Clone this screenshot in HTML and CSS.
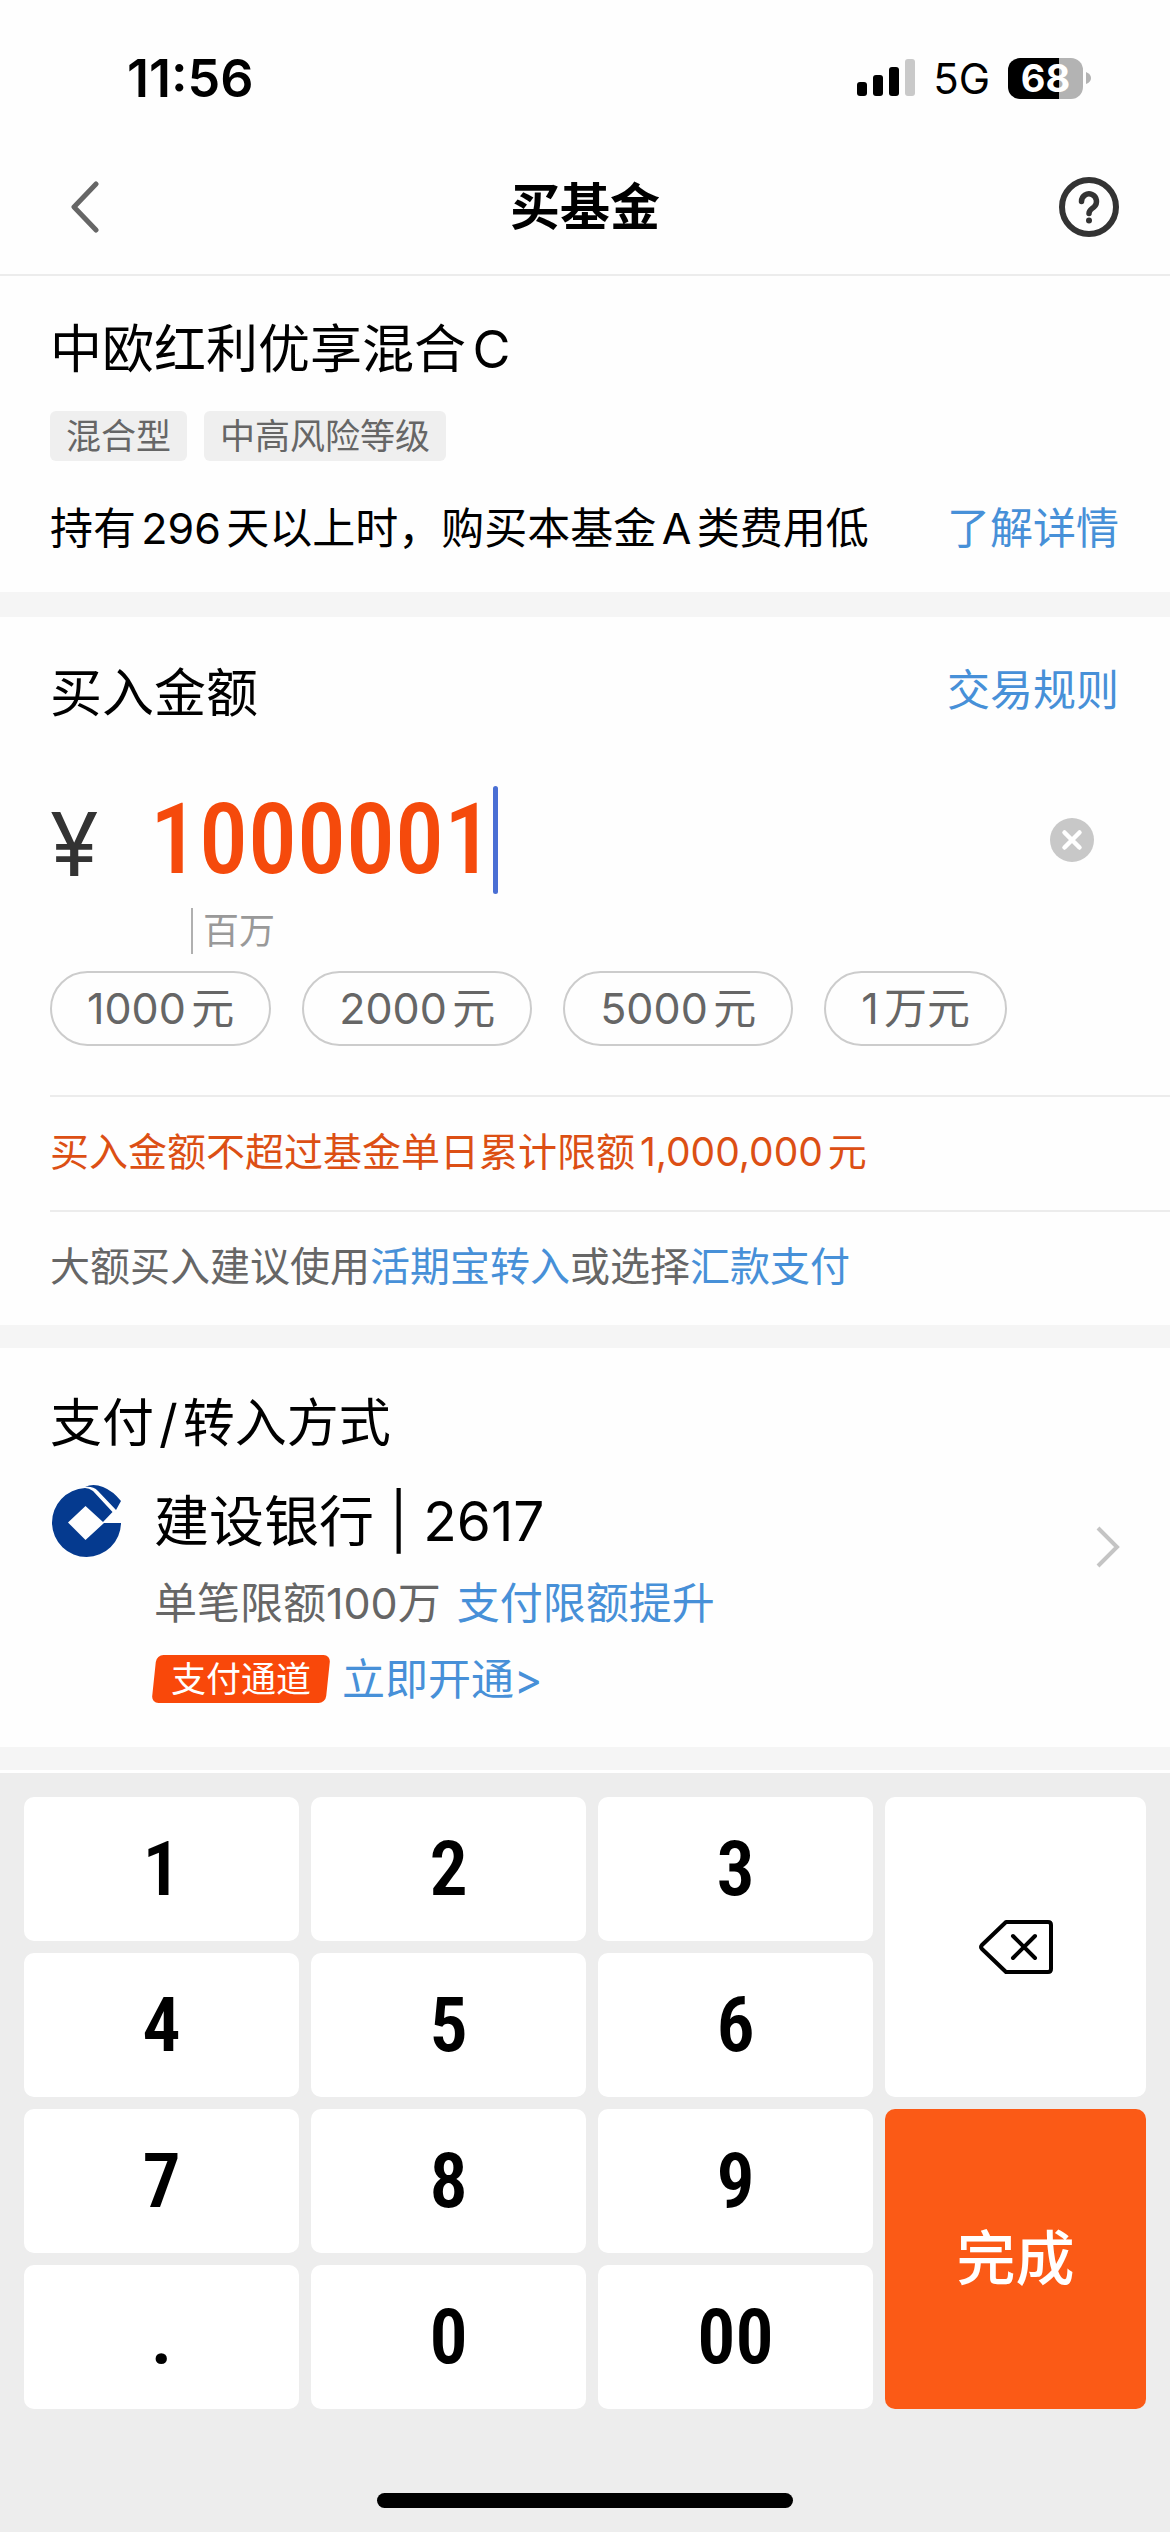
FILE: index.html
```html
<!DOCTYPE html>
<html lang="zh-CN">
<head>
<meta charset="utf-8">
<meta name="viewport" content="width=device-width, initial-scale=1">
<title>买基金</title>
<link rel="stylesheet" href="styles.css">
</head>
<body>
<div class="status">
  <span class="status-time">11:56</span>
  <div class="status-right">
    <svg class="signal" viewBox="0 0 58 38" aria-hidden="true">
      <rect x="0" y="23" width="10" height="14" rx="3"/>
      <rect x="16" y="16" width="10" height="21" rx="3"/>
      <rect x="32" y="8" width="10" height="29" rx="3"/>
      <rect x="48" y="0" width="10" height="37" rx="3" fill="#c9c9c9"/>
    </svg>
    <span class="status-net">5G</span>
    <div class="battery">
      <span class="battery-cell">68</span>
      <svg class="battery-tip" viewBox="0 0 5 12" aria-hidden="true"><path d="M0 0Q5 2 5 6T0 12Z" fill="#b3b3b3"/></svg>
    </div>
  </div>
</div>

<header class="nav">
  <button class="icon-btn icon-btn-back" type="button" aria-label="返回">
    <svg class="icon-back" viewBox="0 0 28 52" fill="none" stroke="#666" stroke-width="5" stroke-linecap="round" stroke-linejoin="round"><path d="M25 3 3 26l22 23"/></svg>
  </button>
  <h1 class="nav-title">买基金</h1>
  <button class="icon-btn" type="button" aria-label="帮助">
    <svg class="icon-help" viewBox="0 0 60 60" fill="none" stroke="#333" stroke-linecap="round" stroke-linejoin="round">
      <circle cx="30" cy="30" r="27" stroke-width="6"/>
      <path d="M22.500 24.500a7.500 7.500 0 1 1 12.500 5.500c-3 2.500-5 3-5 6.500" stroke-width="5.500"/>
      <circle cx="30" cy="43.500" r="3" fill="#333" stroke="none"/>
    </svg>
  </button>
</header>

<main>
  <section class="fund">
    <h2 class="heading">中欧红利优享混合C</h2>
    <div class="tags"><span class="tag">混合型</span><span class="tag">中高风险等级</span></div>
    <div class="fund-note">
      <p class="text-md">持有296天以上时，购买本基金A类费用低</p>
      <a class="text-md" href="#detail">了解详情</a>
    </div>
  </section>

  <section class="buy">
    <div class="buy-head">
      <h2 class="heading"><label for="amount">买入金额</label></h2>
      <a class="text-md" href="#rules">交易规则</a>
    </div>
    <div class="amount">
      <span class="amount-sign">¥</span>
      <input class="amount-input" id="amount" type="text" inputmode="decimal" value="1000001">
      <span class="amount-caret"></span>
      <button class="clear" type="button" aria-label="清除">
        <svg viewBox="0 0 44 44"><circle cx="22" cy="22" r="22" fill="#c8c8c8"/><path d="M14.500 14.500l15 15m0-15l-15 15" stroke="#fff" stroke-width="4.500" stroke-linecap="round"/></svg>
      </button>
    </div>
    <div class="unit"><span class="unit-text">百万</span></div>
    <div class="pills">
      <button class="pill" type="button">1000元</button>
      <button class="pill" type="button">2000元</button>
      <button class="pill" type="button">5000元</button>
      <button class="pill" type="button">1万元</button>
    </div>
    <p class="row row-warn">买入金额不超过基金单日累计限额1,000,000元</p>
    <p class="row row-tip">大额买入建议使用<a href="#transfer">活期宝转入</a>或选择<a href="#remit">汇款支付</a></p>
  </section>

  <section class="pay">
    <h2 class="heading">支付<span class="slash">/</span>转入方式</h2>
    <div class="bank">
      <svg class="bank-logo" viewBox="0 0 72 72" aria-hidden="true">
        <path fill="#053a8f" d="M35 3A34.500 34.500 0 1 0 71 38H54L35.500 55 18 37.500 35.500 21 53 37 62.500 27 43 6Q39 3 35 3Z"/>
        <path fill="#053a8f" d="M35 2Q43-2 53 2 63 6 71 16L66 25 48 6Q43 1 35 2Z"/>
      </svg>
      <div class="bank-info">
        <div class="bank-name">建设银行 | 2617</div>
        <div class="bank-limit"><span>单笔限额100万</span><a href="#raise">支付限额提升</a></div>
        <div class="bank-channel"><span class="badge">支付通道</span><a href="#open">立即开通&gt;</a></div>
      </div>
      <svg class="bank-arrow" viewBox="0 0 24 42" fill="none" stroke="#c4c4c4" stroke-width="4" aria-hidden="true"><path d="M2 2l19 19L2 40"/></svg>
    </div>
  </section>
</main>

<footer class="keyboard">
  <div class="keys">
    <button class="key" type="button">1</button>
    <button class="key" type="button">2</button>
    <button class="key" type="button">3</button>
    <button class="key key-tall" type="button" aria-label="删除">
      <svg class="icon-del" viewBox="0 0 74 54" fill="none" stroke="#000" stroke-width="4" stroke-linecap="round" stroke-linejoin="round"><path d="M27 2h42q3 0 3 3v44q0 3-3 3H27L3 29q-2-2 0-4Z"/><path d="M34 16l22 22m0-22L34 38"/></svg>
    </button>
    <button class="key" type="button">4</button>
    <button class="key" type="button">5</button>
    <button class="key" type="button">6</button>
    <button class="key" type="button">7</button>
    <button class="key" type="button">8</button>
    <button class="key" type="button">9</button>
    <button class="key key-tall key-done" type="button">完成</button>
    <button class="key" type="button">.</button>
    <button class="key" type="button">0</button>
    <button class="key" type="button">00</button>
  </div>
  <div class="home-bar"></div>
</footer>
</body>
</html>
```
FILE: styles.css
```css
* {
  box-sizing: border-box;
  margin: 0;
  padding: 0;
}

body {
  display: flex;
  flex-direction: column;
  min-height: 100vh;
  background: #fefefe;
  color: #000;
  font-family: Inter, "Noto Sans CJK SC", sans-serif;
  text-autospace: normal;
}

button,
input {
  border: 0;
  background: none;
  font: inherit;
  color: inherit;
}

a {
  color: #4790d8;
  text-decoration: none;
}

svg {
  display: block;
}

/* Status bar */
.status {
  display: flex;
  align-items: center;
  justify-content: space-between;
  height: 140px;
  padding: 16px 79px 0 127px;
}

.status-time {
  font-size: 52px;
  font-weight: 600;
}

.status-right {
  display: flex;
  align-items: center;
}

.signal {
  width: 58px;
  height: 38px;
}

.status-net {
  margin: 0 18px;
  font-size: 42px;
}

.battery {
  display: flex;
  align-items: center;
  gap: 3px;
}

.battery-cell {
  width: 75px;
  height: 41px;
  border-radius: 12px;
  background: linear-gradient(90deg, #000 68%, #b3b3b3 68%);
  color: #fff;
  font-size: 38px;
  font-weight: 700;
  line-height: 41px;
  text-align: center;
}

.battery-tip {
  width: 5px;
  height: 12px;
}

/* Navigation */
.nav {
  display: flex;
  align-items: center;
  justify-content: space-between;
  height: 136px;
  padding: 0 51px;
  border-bottom: 2px solid #ececec;
}

.icon-btn {
  display: flex;
  width: 60px;
}

.icon-btn-back {
  padding-left: 20px;
}

.icon-back {
  width: 28px;
  height: 52px;
}

.icon-help {
  width: 60px;
  height: 60px;
}

.nav-title {
  padding-bottom: 8px;
  font-size: 50px;
  font-weight: 700;
}

/* Shared text */
.heading {
  font-size: 52px;
  font-weight: 400;
  line-height: 72px;
}

.text-md {
  font-size: 43px;
  line-height: 64px;
}

/* Fund summary */
.fund {
  padding: 38px 51px 32px 50px;
}

.tags {
  display: flex;
  gap: 17px;
  margin: 25px 0 35px;
}

.tag {
  padding: 0 16px;
  border-radius: 6px;
  background: #efefef;
  color: #666;
  font-size: 35px;
  line-height: 50px;
}

.fund-note,
.buy-head {
  display: flex;
  justify-content: space-between;
}

/* Amount */
.buy {
  padding: 41px 0 0 50px;
  border-top: 25px solid #f5f5f5;
}

.buy-head {
  padding-right: 51px;
}

.amount {
  display: flex;
  align-items: center;
  height: 108px;
  margin: 56px 76px 14px 0;
}

.amount-sign {
  width: 100px;
  padding-top: 8px;
  color: #333;
  font-size: 88px;
}

.amount-input {
  field-sizing: content;
  outline: 0;
  color: #f54a0c;
  font-family: "Roboto Condensed", "Liberation Sans Narrow", "Noto Sans CJK SC", sans-serif;
  font-size: 98px;
  font-weight: 500;
  line-height: 108px;
}

.amount-caret {
  width: 5px;
  height: 108px;
  border-radius: 3px;
  background: #4a6fd4;
}

.clear {
  width: 44px;
  margin-left: auto;
}

.unit {
  padding-left: 141px;
  margin-bottom: 17px;
}

.unit-text {
  display: block;
  padding-left: 10px;
  border-left: 2px solid #b0b0b0;
  color: #999;
  font-size: 36px;
  line-height: 46px;
}

.pills {
  display: flex;
  gap: 31px;
  margin-bottom: 49px;
}

.pill {
  padding: 0 35px;
  border: 2px solid #ccc;
  border-radius: 38px;
  color: #666;
  font-size: 43px;
  line-height: 71px;
}

.row {
  padding-bottom: 4px;
  border-top: 2px solid #ececec;
  line-height: 109px;
}

.row-warn {
  color: #dc4f14;
  font-size: 39px;
}

.row-tip {
  color: #666;
  font-size: 40px;
}

/* Payment */
.pay {
  padding: 40px 50px 44px;
  border-top: 23px solid #f5f5f5;
}

.slash {
  margin: 0 5px;
}

.bank {
  display: flex;
  align-items: flex-start;
  margin-top: 25px;
}

.bank-logo {
  width: 72px;
  height: 72px;
}

.bank-info {
  flex: 1;
  margin-left: 32px;
}

.bank-name {
  font-size: 55px;
  line-height: 72px;
}

.bank-limit,
.bank-channel {
  display: flex;
  align-items: center;
  font-size: 43px;
}

.bank-limit {
  gap: 16px;
  margin: 14px 0 20px;
  color: #666;
  line-height: 64px;
  text-autospace: no-autospace;
}

.bank-channel {
  gap: 14px;
  line-height: 48px;
}

.badge {
  position: relative;
  z-index: 0;
  padding: 0 17px;
  color: #fff;
  font-size: 35px;
}

.badge::before {
  content: "";
  position: absolute;
  z-index: -1;
  inset: 0;
  border-radius: 7px;
  background: #f9480a;
  transform: skewX(-6deg);
}

.bank-arrow {
  width: 24px;
  height: 42px;
  margin-top: 41px;
}

/* Keyboard */
.keyboard {
  display: flex;
  flex: 1;
  flex-direction: column;
  justify-content: space-between;
  padding: 24px;
  border-top: 3px solid #fff;
  background: #ededed;
  box-shadow: 0 -23px #f5f5f5;
  margin-top: 23px;
}

.keys {
  display: grid;
  grid-template-columns: 275fr 275fr 275fr 261fr;
  grid-auto-rows: 144px;
  gap: 12px;
}

.key {
  display: flex;
  align-items: center;
  justify-content: center;
  border-radius: 10px;
  background: #fff;
  font-family: "Roboto Condensed", "Liberation Sans Narrow", "Noto Sans CJK SC", sans-serif;
  font-size: 76px;
  font-weight: 600;
}

.key-tall {
  grid-row: span 2;
}

.key-done {
  padding-bottom: 10px;
  background: #fb5a16;
  color: #fff;
  font-size: 59px;
  font-weight: 500;
}

.icon-del {
  width: 74px;
  height: 54px;
}

.home-bar {
  width: 37%;
  height: 15px;
  margin: 84px auto 0;
  border-radius: 8px;
  background: #000;
}
```
